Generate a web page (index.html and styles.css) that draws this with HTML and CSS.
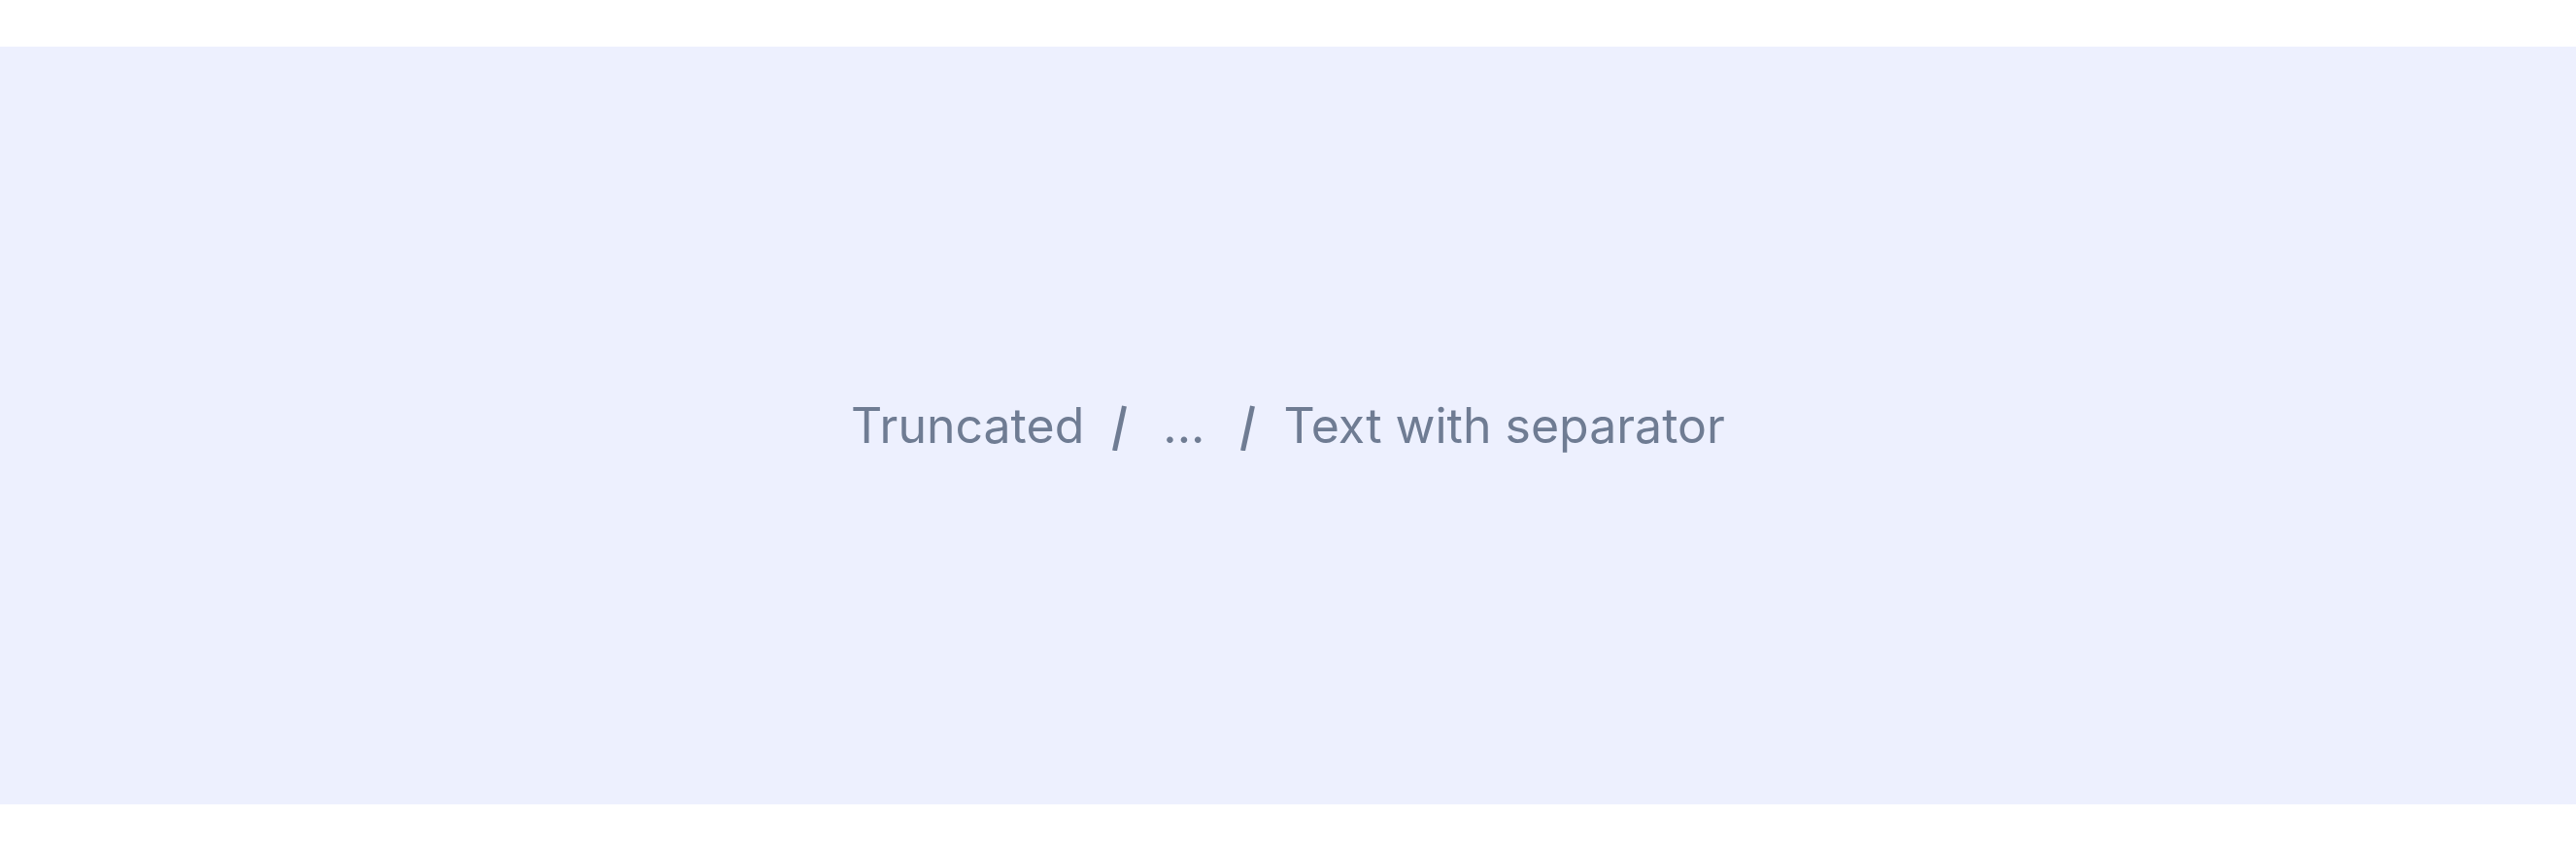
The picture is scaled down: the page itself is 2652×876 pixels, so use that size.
FILE: index.html
```html
<!DOCTYPE html>
<html>
<head>
<meta charset="utf-8">
<link rel="stylesheet" href="styles.css">
</head>
<body>
<div class="page">
  <div class="stage">
    <nav class="breadcrumb">
      <span class="crumb">Truncated</span>
      <svg class="sep" viewBox="0 0 20 52" aria-hidden="true"><line x1="15.5" y1="6" x2="5.5" y2="52"/></svg>
      <span class="crumb ellipsis">...</span>
      <svg class="sep" viewBox="0 0 20 52" aria-hidden="true"><line x1="15.5" y1="6" x2="5.5" y2="52"/></svg>
      <span class="crumb">Text with separator</span>
    </nav>
  </div>
</div>
</body>
</html>
```
FILE: styles.css
```css
html, body {
  margin: 0;
  padding: 0;
  background: #ffffff;
}
.page {
  padding: 48px 0;
}
.stage {
  height: 780px;
  background: #edf0fe;
  display: flex;
  align-items: center;
  justify-content: center;
}
.breadcrumb {
  display: flex;
  align-items: center;
  font-family: "Inter", "Noto Sans", sans-serif;
  font-size: 50px;
  line-height: 60px;
  color: #6f7c93;
}
.crumb {
  white-space: nowrap;
}
.ellipsis {
  margin: 0 8px;
}
.sep {
  width: 20px;
  height: 52px;
  margin: 0 27px 0 26px;
  stroke: #6f7c93;
  stroke-width: 5;
  stroke-linecap: butt;
}
```
